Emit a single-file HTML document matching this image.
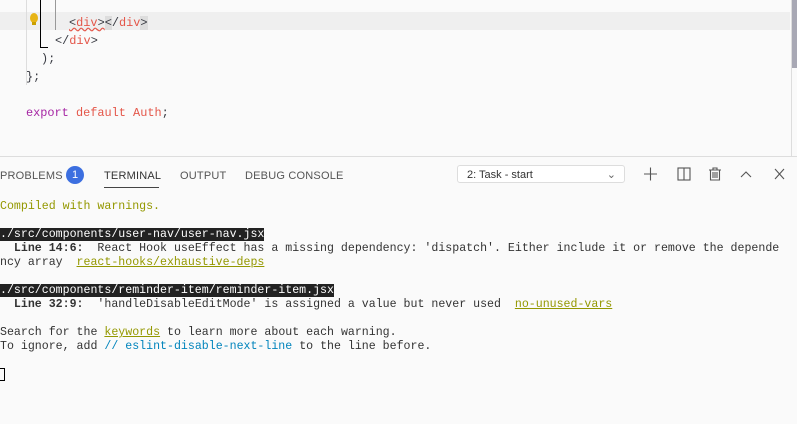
<!DOCTYPE html>
<html><head><style>
body{margin:0;width:797px;height:424px;overflow:hidden;background:#fafafa;position:relative;font-family:"Liberation Mono",monospace}
.a{position:absolute;white-space:pre}
.ed{font-size:11.9px;line-height:18px;color:#383a42}
.t{font-size:11.6px;line-height:14px;color:#333}
.kw{color:#a626a4}.tg{color:#e45649}
.tab{position:absolute;top:170px;font-family:"Liberation Sans",sans-serif;font-size:11px;color:#555;letter-spacing:.2px}
.hl{background:#222;color:#fff}
.y{color:#949800}
.u{text-decoration:underline;color:#949800}
.c{color:#0184bc}
</style></head><body>
<div class="a" style="left:0;top:12px;width:790px;height:18px;background:#efefef"></div>
<div class="a" style="left:26px;top:0;width:1px;height:85px;background:#ddd"></div>
<div class="a" style="left:40px;top:0;width:1px;height:48px;background:#000"></div>
<div class="a" style="left:40px;top:47px;width:8px;height:1px;background:#000"></div>
<div class="a" style="left:55px;top:0;width:1px;height:30px;background:#999"></div>
<div class="a" style="left:30px;top:13px;width:8px;height:10px;border-radius:50%;background:#e7b416"></div>
<div class="a" style="left:32px;top:22px;width:4px;height:3px;background:#c9a000"></div>
<div class="a ed" style="left:69px;top:14px"><span style="text-decoration:underline wavy #e45649">&lt;<span class="tg">div</span>&gt;</span><span style="background:#ddd">&lt;</span>/<span class="tg">div</span><span style="background:#ddd">&gt;</span></div>
<div class="a ed" style="left:55px;top:32px">&lt;/<span class="tg">div</span>&gt;</div>
<div class="a ed" style="left:41px;top:50px">);</div>
<div class="a ed" style="left:26px;top:68px">};</div>
<div class="a ed" style="left:26px;top:104px"><span class="kw">export</span> <span class="tg">default Auth</span>;</div>
<div class="a" style="left:792px;top:0;width:5px;height:68px;background:#a8a8b4"></div>
<div class="a" style="left:791px;top:0;width:1px;height:156px;background:#ddd"></div>
<div class="a" style="left:0;top:156px;width:797px;height:1px;background:#ddd"></div>
<div class="tab" style="left:0">PROBLEMS</div>
<div class="a" style="left:66px;top:166px;width:18px;height:18px;border-radius:50%;background:#3c6fe0;color:#fff;font-family:'Liberation Sans',sans-serif;font-size:11px;text-align:center;line-height:18px">1</div>
<div class="tab" style="left:104px;color:#333">TERMINAL</div>
<div class="a" style="left:104px;top:187px;width:55px;height:1px;background:#444"></div>
<div class="tab" style="left:180px">OUTPUT</div>
<div class="tab" style="left:245px">DEBUG CONSOLE</div>
<div class="a" style="left:457px;top:165px;width:168px;height:18px;border:1px solid #ddd;border-radius:3px;background:#fff;font-family:'Liberation Sans',sans-serif;font-size:11px;line-height:18px;color:#333;box-sizing:border-box;padding-left:9px">2: Task - start<span style="position:absolute;right:8px;color:#666">⌄</span></div>
<svg class="a" style="left:640px;top:164px" width="150" height="20" fill="none" stroke="#555" stroke-width="1.1">
<path d="M4 10h13M10.5 3.5v13"/>
<rect x="38" y="4" width="12" height="12"/><path d="M44 4v12"/>
<path d="M69 6h12M73 6V4h4v2M70.5 6v10h9V6M73 8v6M75 8v6M77 8v6"/>
<path d="M101 13l5-5 5 5"/>
<path d="M135 5l9 10M144 5l-9 10"/>
</svg>
<div class="a t y" style="left:0;top:200px">Compiled with warnings.</div>
<div class="a t" style="left:0;top:228px"><span class="hl">./src/components/user-nav/user-nav.jsx</span>
  <b>Line 14:6:</b>  React Hook useEffect has a missing dependency: 'dispatch'. Either include it or remove the depende
ncy array  <span class="u">react-hooks/exhaustive-deps</span></div>
<div class="a t" style="left:0;top:284px"><span class="hl">./src/components/reminder-item/reminder-item.jsx</span>
  <b>Line 32:9:</b>  'handleDisableEditMode' is assigned a value but never used  <span class="u">no-unused-vars</span>

Search for the <span class="u">keywords</span> to learn more about each warning.
To ignore, add <span class="c">// eslint-disable-next-line</span> to the line before.</div>
<div class="a" style="left:0;top:368px;width:5px;height:13px;border:1px solid #000;border-left:none;box-sizing:border-box"></div>
</body></html>
